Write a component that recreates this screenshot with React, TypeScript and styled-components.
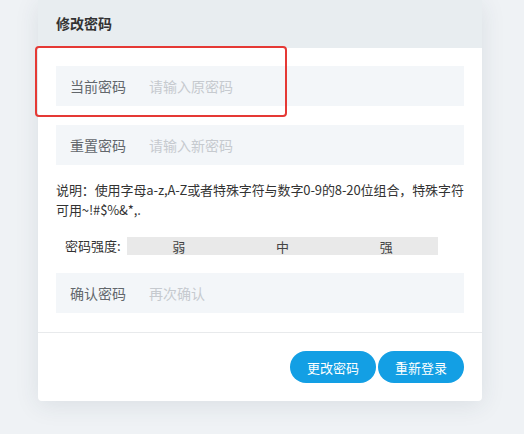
import React from 'react';
import styled, {createGlobalStyle} from "styled-components";

const GlobalStyle = createGlobalStyle`
  html, body {
    margin: 0;
    padding: 0;
    background: #eff2f5;
    font-family: "Noto Sans CJK SC", "Noto Sans", sans-serif;
  }
`

const fields = [
    {label: "当前密码", placeholder: "请输入原密码"},
    {label: "重置密码", placeholder: "请输入新密码"},
]

export default function App() {
    return (
        <Page>
            <GlobalStyle/>
            <Card>
                <Header>修改密码</Header>
                <Body>
                    {fields.map(f => (
                        <Field key={f.label}>
                            <Label>{f.label}</Label>
                            <Input placeholder={f.placeholder}/>
                        </Field>
                    ))}
                    <Hint>说明：使用字母a-z,A-Z或者特殊字符与数字0-9的8-20位组合，特殊字符可用~!#$%&amp;*,.</Hint>
                    <Strength>
                        <StrengthLabel>密码强度:</StrengthLabel>
                        <StrengthBar>
                            <span>弱</span>
                            <span>中</span>
                            <span>强</span>
                        </StrengthBar>
                    </Strength>
                    <Field>
                        <Label>确认密码</Label>
                        <Input placeholder="再次确认"/>
                    </Field>
                </Body>
                <Footer>
                    <Button>更改密码</Button>
                    <Button>重新登录</Button>
                </Footer>
            </Card>
            <Highlight/>
        </Page>
    );
}

const Page = styled.div`
  position: relative;
  height: 434px;
  padding-left: 38px;
  box-sizing: border-box;
`

const Card = styled.div`
  width: 444px;
  background: #fff;
  border-radius: 0 0 4px 4px;
  box-shadow: 0 4px 24px rgba(40, 60, 80, 0.10);
`

const Header = styled.div`
  height: 46px;
  padding: 0 0 2px 18px;
  display: flex;
  align-items: center;
  background: #e8edf0;
  color: #333;
  font-size: 14px;
  font-weight: 700;
`

const Body = styled.div`
  padding: 18px 18px 19px;
  display: flex;
  flex-direction: column;
`

const Field = styled.div`
  height: 40px;
  display: flex;
  align-items: center;
  padding-left: 14px;
  background: #f3f6f9;
  margin-bottom: 19px;
  &:last-child {
    margin-bottom: 0;
  }
`

const Label = styled.span`
  width: 79px;
  flex-shrink: 0;
  font-size: 14px;
  color: #62676c;
`

const Input = styled.input`
  flex: 1;
  border: none;
  outline: none;
  background: transparent;
  font-family: inherit;
  font-size: 14px;
  color: #333;
  padding: 0;
  &::placeholder {
    color: #c6cacf;
  }
`

const Hint = styled.p`
  margin: -4px -8px 0 0;
  font-size: 13px;
  letter-spacing: -0.1px;
  line-height: 20px;
  color: #333;
`

const Strength = styled.div`
  display: flex;
  align-items: center;
  margin: 16px 0 18px;
  padding-left: 9px;
`

const StrengthLabel = styled.span`
  width: 62px;
  font-size: 13px;
  color: #333;
`

const StrengthBar = styled.div`
  width: 311px;
  height: 18px;
  display: grid;
  grid-template-columns: repeat(3, 1fr);
  background: #e9e9e9;
  font-size: 13px;
  color: #444;
  span {
    display: flex;
    align-items: center;
    justify-content: center;
  }
`

const Footer = styled.div`
  border-top: 1px solid #e8eaec;
  display: flex;
  justify-content: flex-end;
  gap: 2px;
  padding: 18px 18px 18px;
`

const Button = styled.button`
  width: 86px;
  height: 32px;
  border: none;
  border-radius: 16px;
  background: #139fe4;
  color: #fff;
  font-family: inherit;
  font-size: 13px;
  cursor: pointer;
`

const Highlight = styled.div`
  position: absolute;
  left: 35px;
  top: 46px;
  width: 252px;
  height: 71px;
  box-sizing: border-box;
  border: 2px solid #e53935;
  border-radius: 4px;
  pointer-events: none;
`
